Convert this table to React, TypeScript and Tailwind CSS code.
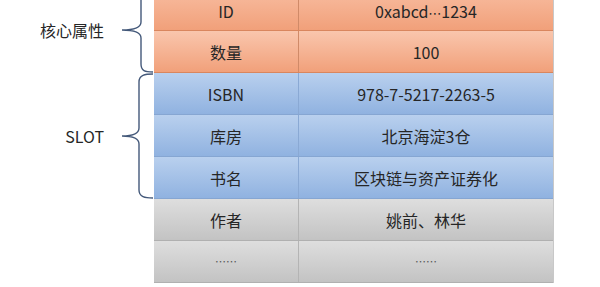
import React from 'react';

type Row = { key: string; value: React.ReactNode; tone: 'orange' | 'blue' | 'gray'; dots?: boolean };

const rows: Row[] = [
  {
    key: 'ID',
    value: (
      <>
        0xabcd<span className="font-['DejaVu_Sans'] text-[13px]">⋯</span>1234
      </>
    ),
    tone: 'orange',
  },
  { key: '数量', value: '100', tone: 'orange' },
  { key: 'ISBN', value: '978-7-5217-2263-5', tone: 'blue' },
  { key: '库房', value: '北京海淀3仓', tone: 'blue' },
  { key: '书名', value: '区块链与资产证券化', tone: 'blue' },
  { key: '作者', value: '姚前、林华', tone: 'gray' },
  { key: '……', value: '……', tone: 'gray', dots: true },
];

const toneClass: Record<Row['tone'], string> = {
  orange: 'bg-gradient-to-b from-[#f9c6ad] to-[#f1a07a] border-[#d9865e]',
  blue: 'bg-gradient-to-b from-[#b9d0ee] to-[#90b2e0] border-[#86a6d2]',
  gray: 'bg-gradient-to-b from-[#dedede] to-[#c3c3c3] border-[#b0b0b0]',
};

const dividerClass: Record<Row['tone'], string> = {
  orange: 'border-[#d08a68]',
  blue: 'border-[#8aa9d4]',
  gray: 'border-[#b4b4b4]',
};

// curly brace; m = y of the tip, openTop = top runs off the page
const Brace: React.FC<{ h: number; m: number; x: number; openTop?: boolean }> = ({ h, m, x, openTop }) => {
  const top = openTop ? `M${x},0` : `M33,1 C25,1 ${x},2 ${x},9`;
  const d = `${top} L${x},${m - 8} C${x},${m - 3} ${x - 5},${m} 2,${m} C${x - 5},${m} ${x},${m + 3} ${x},${m + 8} L${x},${h - 9} C${x},${h - 2} 25,${h - 1} 33,${h - 1}`;
  return (
    <svg width="34" height={h} viewBox={`0 0 34 ${h}`} className="shrink-0">
      <path d={d} fill="none" stroke="#44597a" strokeWidth="1.4" />
    </svg>
  );
};

const Group: React.FC<{ label: string; h: number; m: number; x: number; openTop?: boolean }> = ({
  label,
  h,
  m,
  x,
  openTop,
}) => (
  <div className="flex items-start" style={{ height: h }}>
    <div
      className="w-[104px] text-right text-[16px] leading-none text-[#262626]"
      style={{ marginTop: m - 8 }}
    >
      {label}
    </div>
    <div className="w-[16px]" />
    <Brace h={h} m={m} x={x} openTop={openTop} />
  </div>
);

export default function App() {
  return (
    <div
      className="w-[600px] h-[287px] overflow-hidden bg-white"
      style={{ fontFamily: '"Noto Sans CJK SC", "Noto Sans", sans-serif' }}
    >
      <div className="flex">
        <div className="flex flex-col w-[154px]">
          <Group label="核心属性" h={73} m={30} x={21} openTop />
          <Group label="SLOT" h={126} m={63} x={19} />
        </div>
        <div className="flex flex-col w-[400px] border-r border-[#c8c8c8]">
          {rows.map((r, i) => (
            <div
              key={i}
              className={`flex ${i === 0 ? 'h-[31px] bg-gradient-to-b from-[#f6b596] to-[#f1a07a] border-[#d9865e]' : `h-[42px] ${toneClass[r.tone]}`} border-b text-[16px] leading-none text-[#262626]`}
            >
              <div
                className={`w-[145px] flex justify-center border-r ${dividerClass[r.tone]} ${i === 0 ? 'items-start pt-[3px]' : 'items-center'}`}
              >
                <span className={r.dots ? 'text-[11px] text-[#555]' : ''}>{r.key}</span>
              </div>
              <div className={`flex-1 flex justify-center ${i === 0 ? 'items-start pt-[3px]' : 'items-center'}`}>
                <span className={r.dots ? 'text-[11px] text-[#555]' : ''}>{r.value}</span>
              </div>
            </div>
          ))}
        </div>
      </div>
    </div>
  );
}
